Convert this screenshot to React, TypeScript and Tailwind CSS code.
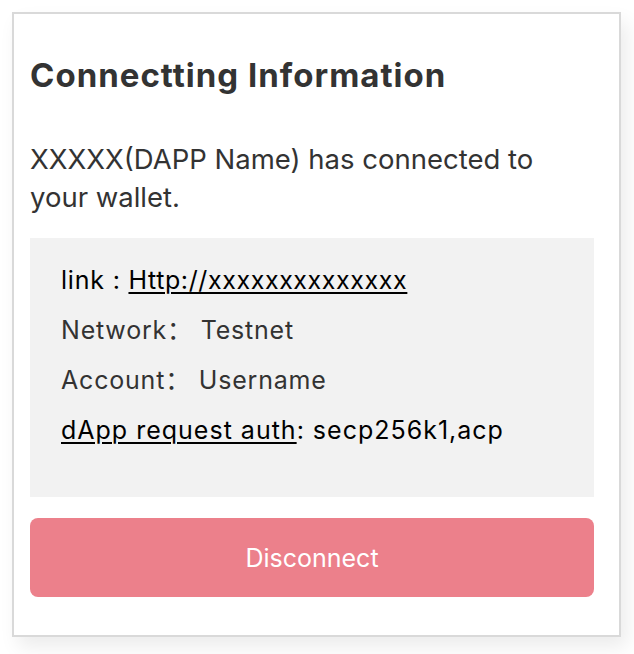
const font = { fontFamily: '"Inter", "Noto Sans CJK SC", sans-serif' };

export default function App() {
  return (
    <div className="min-h-screen w-full bg-white p-3" style={font}>
      {/* Card */}
      <div className="w-[609px] border-2 border-[#d9d9d9] bg-white pt-[41px] pb-[38px] pl-4 pr-[25px] shadow-[6px_10px_18px_rgba(0,0,0,0.08)]">
        <h1 className="text-[33px] font-bold leading-[40px] tracking-[1px] text-[#333333]">
          Connectting Information
        </h1>

        <p className="mt-[45px] text-[27.5px] leading-[38px] text-[#333333]">
          XXXXX(DAPP Name) has connected to
          <br />
          your wallet.
        </p>

        {/* Info box */}
        <div className="mt-[22px] h-[259px] bg-[#f2f2f2] px-[31px] pt-[17px] text-[25px] leading-[50px] tracking-[0.8px]">
          <div className="text-black">
            link : <span className="underline decoration-[1.5px] underline-offset-[3px] tracking-[0.6px]">Http://xxxxxxxxxxxxxx</span>
          </div>
          <div className="text-[#333333]">Network：&nbsp;Testnet</div>
          <div className="text-[#333333]">Account：&nbsp;Username</div>
          <div className="text-black tracking-[1px]">
            <span className="underline decoration-[1.5px] underline-offset-[3px]">dApp request auth</span>: secp256k1,acp
          </div>
        </div>

        <button className="mt-[21px] flex h-[79px] w-full items-center justify-center rounded-lg bg-[#ec808b] pt-[3px] text-[25px] text-white">
          Disconnect
        </button>
      </div>
    </div>
  );
}
